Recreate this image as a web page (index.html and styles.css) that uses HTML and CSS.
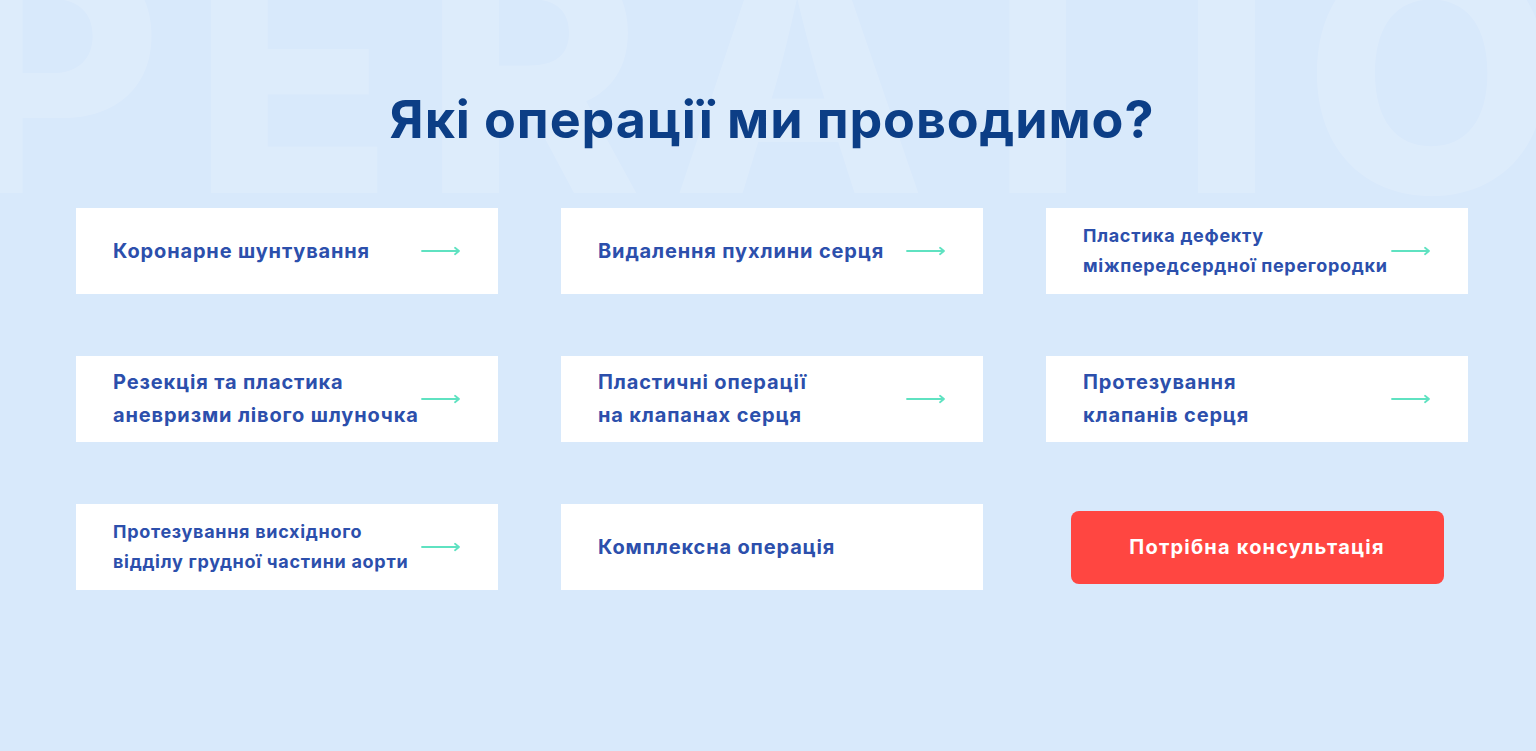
FILE: index.html
```html
<!DOCTYPE html>
<html lang="uk">
<head>
<meta charset="utf-8">
<title>Які операції ми проводимо?</title>
<link rel="stylesheet" href="styles.css">
</head>
<body>
<section class="ops">
  <div class="ops__watermark" aria-hidden="true">OPERATIONS</div>
  <div class="ops__inner">
    <h2 class="ops__title">Які операції ми проводимо?</h2>
    <div class="ops__grid">
      <a class="card" href="#">
        <span class="card__text">Коронарне шунтування</span>
        <svg class="card__arrow" viewBox="0 0 40 10" width="40" height="10"><path d="M1 5H38M34 1.8L38 5L34 8.2" fill="none" stroke="#5fe2c1" stroke-width="1.8" stroke-linecap="round" stroke-linejoin="round"/></svg>
      </a>
      <a class="card" href="#">
        <span class="card__text">Видалення пухлини серця</span>
        <svg class="card__arrow" viewBox="0 0 40 10" width="40" height="10"><path d="M1 5H38M34 1.8L38 5L34 8.2" fill="none" stroke="#5fe2c1" stroke-width="1.8" stroke-linecap="round" stroke-linejoin="round"/></svg>
      </a>
      <a class="card card--small" href="#">
        <span class="card__text">Пластика дефекту<br>міжпередсердної перегородки</span>
        <svg class="card__arrow" viewBox="0 0 40 10" width="40" height="10"><path d="M1 5H38M34 1.8L38 5L34 8.2" fill="none" stroke="#5fe2c1" stroke-width="1.8" stroke-linecap="round" stroke-linejoin="round"/></svg>
      </a>
      <a class="card" href="#">
        <span class="card__text">Резекція та пластика<br>аневризми лівого шлуночка</span>
        <svg class="card__arrow" viewBox="0 0 40 10" width="40" height="10"><path d="M1 5H38M34 1.8L38 5L34 8.2" fill="none" stroke="#5fe2c1" stroke-width="1.8" stroke-linecap="round" stroke-linejoin="round"/></svg>
      </a>
      <a class="card" href="#">
        <span class="card__text">Пластичні операції<br>на клапанах серця</span>
        <svg class="card__arrow" viewBox="0 0 40 10" width="40" height="10"><path d="M1 5H38M34 1.8L38 5L34 8.2" fill="none" stroke="#5fe2c1" stroke-width="1.8" stroke-linecap="round" stroke-linejoin="round"/></svg>
      </a>
      <a class="card" href="#">
        <span class="card__text">Протезування<br>клапанів серця</span>
        <svg class="card__arrow" viewBox="0 0 40 10" width="40" height="10"><path d="M1 5H38M34 1.8L38 5L34 8.2" fill="none" stroke="#5fe2c1" stroke-width="1.8" stroke-linecap="round" stroke-linejoin="round"/></svg>
      </a>
      <a class="card card--small" href="#">
        <span class="card__text">Протезування висхідного<br>відділу грудної частини аорти</span>
        <svg class="card__arrow" viewBox="0 0 40 10" width="40" height="10"><path d="M1 5H38M34 1.8L38 5L34 8.2" fill="none" stroke="#5fe2c1" stroke-width="1.8" stroke-linecap="round" stroke-linejoin="round"/></svg>
      </a>
      <a class="card" href="#">
        <span class="card__text">Комплексна операція</span>
      </a>
      <div class="ops__cta">
        <a class="btn" href="#">Потрібна консультація</a>
      </div>
    </div>
  </div>
</section>
</body>
</html>
```

FILE: styles.css
```css
* {
  box-sizing: border-box;
}

html, body {
  margin: 0;
  padding: 0;
}

body {
  background: #d8e9fb;
  font-family: Inter, "Noto Sans", sans-serif;
}

.ops {
  position: relative;
  overflow: hidden;
  min-height: 751px;
  background: #d8e9fb;
}

.ops__watermark {
  position: absolute;
  left: -338px;
  top: -92px;
  font-family: Inter, sans-serif;
  font-weight: 800;
  font-size: 330px;
  line-height: 1;
  letter-spacing: 30px;
  white-space: nowrap;
  color: rgba(255, 255, 255, 0.15);
  pointer-events: none;
}

.ops__inner {
  position: relative;
  width: 1392px;
  margin-left: 76px;
  padding-top: 89px;
}

.ops__title {
  margin: 0 0 58px;
  text-align: center;
  font-size: 52px;
  line-height: 61px;
  font-weight: 700;
  letter-spacing: 0.9px;
  color: #0c3e86;
}

.ops__grid {
  display: grid;
  grid-template-columns: repeat(3, 422px);
  grid-auto-rows: 86px;
  column-gap: 63px;
  row-gap: 62px;
}

.card {
  display: flex;
  align-items: center;
  justify-content: space-between;
  padding: 0 37px;
  background: #fff;
  text-decoration: none;
}

.card__text {
  font-size: 20px;
  line-height: 33px;
  font-weight: 700;
  letter-spacing: 0.85px;
  color: #2c4fac;
}

.card--small .card__text {
  font-size: 18px;
  line-height: 30px;
  letter-spacing: 0.7px;
}

.card__arrow {
  flex: none;
  display: block;
}

.ops__cta {
  display: flex;
  align-items: center;
  justify-content: center;
}

.btn {
  display: flex;
  align-items: center;
  justify-content: center;
  width: 373px;
  height: 73px;
  border-radius: 8px;
  background: #ff4641;
  color: #fff;
  font-size: 20px;
  font-weight: 700;
  letter-spacing: 1.2px;
  text-decoration: none;
}
```
